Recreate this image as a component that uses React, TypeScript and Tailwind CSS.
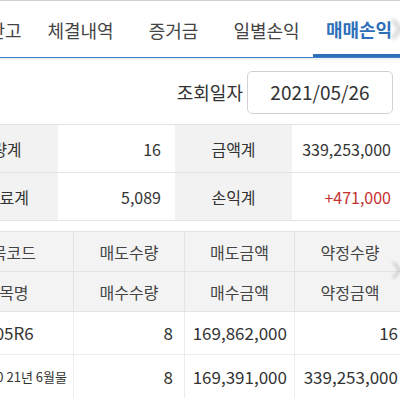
import React from "react";

const font = { fontFamily: '"Noto Sans CJK KR", "Noto Sans", sans-serif' };

function Chevron({ className }: { className: string }) {
  return (
    <svg className={className} viewBox="0 0 10 20" fill="none">
      <path d="M2 3 L8 10 L2 17" stroke="#9a9a9a" strokeWidth="3" strokeLinecap="round" strokeLinejoin="round" />
    </svg>
  );
}

export default function App() {
  const tabs = [
    { t: "잔고", w: "w-[58px]" },
    { t: "체결내역", w: "w-[93px]" },
    { t: "증거금", w: "w-[93px]" },
    { t: "일별손익", w: "w-[93px]" },
  ];
  return (
    <div className="relative w-[400px] h-[400px] overflow-hidden bg-white text-[#333]" style={font}>
      {/* tab bar */}
      <div className="border-t border-[#cfcfcf]">
        <div className="flex h-[57px] border-b border-[#3d7cc6] overflow-hidden">
          <div className="flex -ml-[24px] shrink-0">
            {tabs.map((x) => (
              <div key={x.t} className={`${x.w} shrink-0 flex items-center justify-center text-[18px] text-[#444] pt-[2px]`}>
                {x.t}
              </div>
            ))}
            <div className="w-[92px] shrink-0 flex items-center justify-center text-[18px] font-semibold text-[#2e6fba] border-b-[3px] border-[#2e6fba] pt-[4px]">
              매매손익
            </div>
          </div>
        </div>
        <div className="h-[2px] bg-[#eef3f2]" />
      </div>

      {/* date row */}
      <div className="flex h-[64px] items-center justify-end pr-[7px] gap-[4px]">
        <span className="text-[18px] text-[#333]">조회일자</span>
        <div className="w-[146px] h-[43px] rounded-[5px] border border-[#d2d2d2] flex items-center justify-center text-[19px] text-[#333]">
          2021/05/26
        </div>
      </div>

      {/* summary */}
      <div className="overflow-hidden border-t border-[#e3e3e3]">
        <div className="-ml-[59px] flex flex-col w-[464px]">
          {[
            ["수량계", "16", "금액계", "339,253,000", false],
            ["수수료계", "5,089", "손익계", "+471,000", true],
          ].map((r, i) => (
            <div key={i} className="flex h-[48px] border-b border-[#e3e3e3] text-[16px]">
              <div className="w-[117px] bg-[#f2f2f2] flex items-center justify-center">{r[0] as string}</div>
              <div className="w-[117px] flex items-center justify-end pr-[14px]">{r[1] as string}</div>
              <div className="w-[117px] bg-[#f2f2f2] flex items-center justify-center">{r[2] as string}</div>
              <div className={`w-[113px] flex items-center justify-end pr-[14px] ${r[4] ? "text-[#c53030]" : ""}`}>{r[3] as string}</div>
            </div>
          ))}
        </div>
      </div>

      {/* detail table */}
      <div className="mt-[10px] overflow-hidden border-t border-[#e3e3e3]">
        <div className="-ml-[60px] w-[480px]">
          {[
            ["종목코드", "매도수량", "매도금액", "약정수량"],
            ["종목명", "매수수량", "매수금액", "약정금액"],
          ].map((r, i) => (
            <div key={i} className="flex h-[40px] bg-[#f3f3f3] border-b border-[#e3e3e3] text-[16px] text-[#444]">
              <div className="w-[134px] flex items-center justify-center border-r border-[#e3e3e3]">{r[0]}</div>
              <div className="w-[111px] flex items-center justify-center border-r border-[#e3e3e3]">{r[1]}</div>
              <div className="w-[110px] flex items-center justify-center border-r border-[#e3e3e3]">{r[2]}</div>
              <div className="w-[110px] flex items-center justify-center">{r[3]}</div>
            </div>
          ))}
          <div className="flex h-[43px] border-b border-[#ececec] text-[17px]">
            <div className="w-[134px] flex items-center justify-center border-r border-[#ececec] pl-[6px]">105R6</div>
            <div className="w-[111px] flex items-center justify-end pr-[11px] border-r border-[#ececec]">8</div>
            <div className="w-[110px] flex items-center justify-end pr-[7px] border-r border-[#ececec]">169,862,000</div>
            <div className="w-[110px] flex items-center justify-end pr-[7px]">16</div>
          </div>
          <div className="flex h-[43px] text-[17px]">
            <div className="w-[134px] flex items-center justify-center border-r border-[#ececec] text-[13px] whitespace-nowrap">코스피200 21년 6월물</div>
            <div className="w-[111px] flex items-center justify-end pr-[11px] border-r border-[#ececec]">8</div>
            <div className="w-[110px] flex items-center justify-end pr-[7px] border-r border-[#ececec]">169,391,000</div>
            <div className="w-[110px] flex items-center justify-end pr-[7px] whitespace-nowrap">339,253,000</div>
          </div>
        </div>
      </div>

      <Chevron className="absolute left-[391px] top-[16px] w-[12px] h-[26px] opacity-50 blur-[2px]" />
      <Chevron className="absolute left-[392px] top-[258px] w-[10px] h-[24px] opacity-40 blur-[1.5px]" />
    </div>
  );
}
